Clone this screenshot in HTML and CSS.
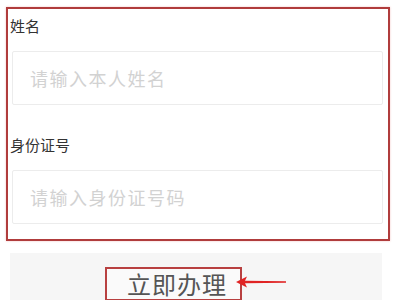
FILE: index.html
```html
<!DOCTYPE html>
<html lang="zh-CN">
<head>
    <meta charset="UTF-8">
    <meta name="viewport" content="width=device-width, initial-scale=1.0">
    <title>立即办理</title>
    <link rel="stylesheet" href="styles.css">
</head>
<body>
    <div class="form-box">
        <div class="label">姓名</div>
        <input class="field" type="text" placeholder="请输入本人姓名">
        <div class="label label-second">身份证号</div>
        <input class="field" type="text" placeholder="请输入身份证号码">
    </div>

    <div class="action-bar">
        <div class="submit">立即办理</div>
        <svg class="arrow" width="50" height="12" viewBox="0 0 50 12">
            <polygon points="0,6 11,0.5 9,4.8 50,5.2 50,6.8 9,7.2 11,11.5" fill="#e02424"/>
        </svg>
    </div>
</body>
</html>
```

FILE: styles.css
```css
body {
    margin: 0;
    background-color: #fff;
    font-family: "Noto Sans CJK SC", "Noto Sans", sans-serif;
    color: #333;
}
.form-box {
    margin: 7px 10px 0 6px;
    border: 2px solid #b03c3c;
    box-shadow: 0 0 2px rgba(220, 80, 80, 0.35);
    padding: 7px 5px 15px 2px;
    display: flex;
    flex-direction: column;
}
.label {
    font-size: 15px;
    line-height: 20px;
    height: 20px;
    margin-bottom: 15px;
}
.label-second {
    margin-top: 30px;
}
.field {
    box-sizing: border-box;
    margin: 0 0 0 2px;
    height: 54px;
    border: 1px solid #ececec;
    border-radius: 2px;
    padding: 0 0 0 17px;
    font-family: inherit;
    font-size: 18px;
    letter-spacing: 1.5px;
    color: #333;
    outline: none;
    background: #fff;
}
.field::placeholder {
    color: #d2d2d2;
}
.action-bar {
    margin: 12px 18px 0 10px;
    padding: 14px 0 0 95px;
    height: 40px;
    background-color: #f6f6f6;
    display: flex;
    align-items: flex-start;
}
.submit {
    border: 2px solid #b84040;
    padding: 0 13px 0 20px;
    font-size: 24px;
    line-height: 30px;
    letter-spacing: 1px;
    color: #555;
    background: #fafafa;
}
.arrow {
    margin: 9px 0 0 -6px;
}
```
